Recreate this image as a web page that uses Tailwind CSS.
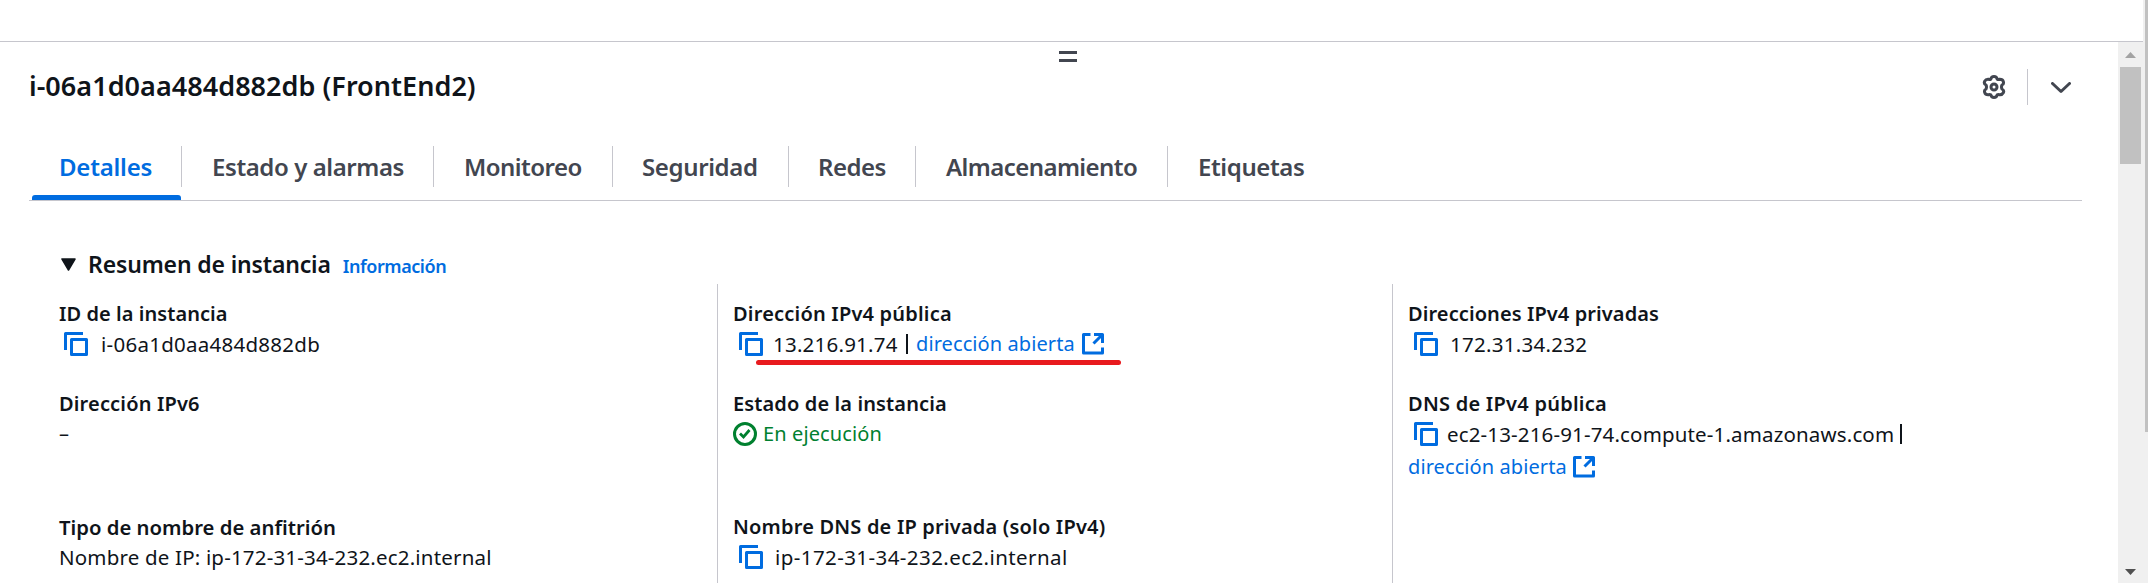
<!DOCTYPE html>
<html lang="es">
<head>
<meta charset="utf-8">
<title>Instancias | EC2</title>
<script src="https://cdn.jsdelivr.net/npm/@tailwindcss/browser@4"></script>
</head>
<body class="flex h-[583px] w-[2148px] overflow-hidden bg-white font-['Noto_Sans','Open_Sans',sans-serif] text-[20px] leading-[30px] text-[#0f141a]">
<svg class="hidden">
  <symbol id="copy" viewBox="0 0 24 24"><path d="M1.5 18V1.5H19" fill="none" stroke="#006ce0" stroke-width="3" stroke-linejoin="round"/><rect x="7.5" y="7.5" width="15" height="15" fill="none" stroke="#006ce0" stroke-width="3" stroke-linejoin="round"/></symbol>
  <symbol id="ext" viewBox="0 0 22 22"><path d="M8.5 1.5H1.5V20H20.5V14.5M12 1.5H20.5V10M20 2L11.500 10.500" fill="none" stroke="#006ce0" stroke-width="3" stroke-linejoin="round"/></symbol>
</svg>
<div class="flex w-[2143px] shrink-0 flex-col">
  <div class="h-[42px] shrink-0 border-b border-[#c6c6cd]"></div>
  <div class="flex min-h-0 flex-1">
    <main class="w-[2118px] shrink-0 overflow-hidden">
      <div class="flex h-[21px] flex-col items-center pt-[9px] pr-[-18px] pl-[18px]">
        <div class="h-[11px] w-[18px] border-t-[3px] border-b-[3px] border-[#424650]"></div>
      </div>
      <header class="flex h-[48px] items-center pl-[29px]">
        <h1 class="flex-1 pb-[2px] text-[27px] leading-[36px] font-semibold tracking-[0.04px]">i-06a1d0aa484d882db (FrontEnd2)</h1>
        <svg class="h-[24px] w-[24px]" viewBox="0 0 24 24" fill="none" stroke="#424650" stroke-width="3" stroke-linejoin="round"><path d="M8.800 4.200Q9.300 1.500 12 1.500T15.200 4.200Q16.200 4.800 17.200 4.300Q20.500 4 21.300 6.500T20 10Q19 12 20 14Q22.500 15.500 21.300 17.800T17.200 19.700Q16.200 19.200 15.200 19.800Q14.700 22.500 12 22.500T8.800 19.800Q7.800 19.200 6.800 19.700Q3.500 20 2.700 17.500T4 14Q5 12 4 10Q1.500 8.500 2.700 6.200T6.800 4.300Q7.800 4.800 8.800 4.200Z"/><circle cx="12" cy="12" r="3"/></svg>
        <div class="ml-[21px] h-[36px] w-px bg-[#c6c6cd]"></div>
        <svg class="mr-[47px] ml-[23px] h-[12px] w-[20px] translate-y-px" viewBox="0 0 20 12"><path d="M1.500 1.500L10 9.500L18.500 1.500" fill="none" stroke="#424650" stroke-width="3" stroke-linecap="round" stroke-linejoin="round"/></svg>
      </header>
      <nav class="ml-[29px] flex h-[90px] w-[2053px] items-end border-b border-[#c6c6cd] pl-[3px] text-[24px] font-semibold text-[#424650]">
        <div class="flex h-[55px] w-[149px] flex-col justify-between text-[#006ce0]"><span class="pt-[7px] pl-[27px] tracking-[-0.22px]">Detalles</span><span class="h-[5px] rounded-t-[3px] bg-[#006ce0]"></span></div>
        <div class="mb-[13px] flex h-[41px] w-[252px] items-center border-l border-[#c6c6cd] pl-[30px] tracking-[-0.42px]">Estado y alarmas</div>
        <div class="mb-[13px] flex h-[41px] w-[179px] items-center border-l border-[#c6c6cd] pl-[30px] tracking-[-0.53px]">Monitoreo</div>
        <div class="mb-[13px] flex h-[41px] w-[176px] items-center border-l border-[#c6c6cd] pl-[29px] tracking-[-0.36px]">Seguridad</div>
        <div class="mb-[13px] flex h-[41px] w-[127px] items-center border-l border-[#c6c6cd] pl-[29px] tracking-[-0.51px]">Redes</div>
        <div class="mb-[13px] flex h-[41px] w-[252px] items-center border-l border-[#c6c6cd] pl-[30px] tracking-[-0.57px]">Almacenamiento</div>
        <div class="mb-[13px] flex h-[41px] items-center border-l border-[#c6c6cd] pl-[30px] tracking-[-0.39px]">Etiquetas</div>
      </nav>
      <h2 class="flex h-[83px] items-baseline pt-[48px] pl-[61px] font-semibold">
        <svg class="h-[13px] w-[15px] -translate-y-[2px]" viewBox="0 0 15 13"><path d="M1 1H14L7.500 12Z" fill="#0f141a" stroke="#0f141a" stroke-width="1.500" stroke-linejoin="round"/></svg>
        <span class="ml-[12px] text-[23px] tracking-[-0.15px]">Resumen de instancia</span>
        <a class="ml-[12px] text-[18px] tracking-[-0.44px] text-[#006ce0]">Información</a>
      </h2>
      <div class="flex h-[299px]">
        <section class="flex w-[717px] flex-col pt-[15px] pl-[58px]">
          <div class="h-[90px]">
            <div class="pl-px font-semibold tracking-[0.06px]">ID de la instancia</div>
            <div class="flex items-center"><svg class="ml-[6px] h-[24px] w-[24px]"><use href="#copy"/></svg><span class="ml-[13px] text-[20.5px] tracking-[0.26px]">i-06a1d0aa484d882db</span></div>
          </div>
          <div class="h-[123px]">
            <div class="pl-px font-semibold tracking-[0.16px]">Dirección IPv6</div>
            <div class="pl-px">–</div>
          </div>
          <div>
            <div class="pl-px text-[20.3px] font-semibold">Tipo de nombre de anfitrión</div>
            <div class="pl-px text-[20.5px] tracking-[0.18px]">Nombre de IP: ip-172-31-34-232.ec2.internal</div>
          </div>
        </section>
        <section class="flex w-[675px] flex-col border-l border-[#c6c6cd] pt-[15px] pl-[15px]">
          <div class="relative h-[90px]">
            <div class="font-semibold tracking-[0.2px]">Dirección IPv4 pública</div>
            <div class="flex items-center"><svg class="ml-[6px] h-[24px] w-[24px]"><use href="#copy"/></svg><span class="ml-[10px] w-[133px] text-[20.5px] tracking-[0.22px]">13.216.91.74</span><span class="h-[20px] w-[2px] bg-[#0f141a]"></span><a class="ml-[8px] tracking-[0.09px] text-[#006ce0]">dirección abierta</a><svg class="ml-[7px] h-[22px] w-[22px]"><use href="#ext"/></svg></div>
            <div class="absolute top-[61px] left-[23px] h-[5px] w-[365px] rounded-full bg-[#e81a1e]"></div>
          </div>
          <div class="h-[123px]">
            <div class="font-semibold tracking-[0.12px]">Estado de la instancia</div>
            <div class="flex items-center text-[#00802f]"><svg class="h-[24px] w-[24px]" viewBox="0 0 24 24" fill="none" stroke="#00802f"><circle cx="12" cy="12" r="10.500" stroke-width="3"/><path d="M7 11.500L10.500 15L16.500 8" stroke-width="2.800"/></svg><span class="ml-[6px] tracking-[0.12px]">En ejecución</span></div>
          </div>
          <div>
            <div class="font-semibold tracking-[0.19px]">Nombre DNS de IP privada (solo IPv4)</div>
            <div class="flex items-center"><svg class="ml-[6px] h-[24px] w-[24px]"><use href="#copy"/></svg><span class="ml-[12px] text-[20.5px] tracking-[0.42px]">ip-172-31-34-232.ec2.internal</span></div>
          </div>
        </section>
        <section class="flex w-[700px] flex-col border-l border-[#c6c6cd] pt-[15px] pl-[15px]">
          <div class="h-[90px]">
            <div class="font-semibold tracking-[0.09px]">Direcciones IPv4 privadas</div>
            <div class="flex items-center"><svg class="ml-[6px] h-[24px] w-[24px]"><use href="#copy"/></svg><span class="ml-[12px] text-[20.5px] tracking-[0.27px]">172.31.34.232</span></div>
          </div>
          <div>
            <div class="font-semibold tracking-[0.25px]">DNS de IPv4 pública</div>
            <div class="flex items-center"><svg class="ml-[6px] h-[24px] w-[24px]"><use href="#copy"/></svg><span class="ml-[9px] w-[453px] text-[20.5px] tracking-[0.15px]">ec2-13-216-91-74.compute-1.amazonaws.com</span><span class="h-[20px] w-[2px] bg-[#0f141a]"></span></div>
            <div class="mt-[3px] flex items-center"><a class="tracking-[0.09px] text-[#006ce0]">dirección abierta</a><svg class="ml-[6px] h-[22px] w-[22px]"><use href="#ext"/></svg></div>
          </div>
        </section>
      </div>
    </main>
    <div class="flex w-[25px] flex-col items-center justify-between bg-[#f0f0f0] pt-[10px] pb-[8px]">
      <div class="flex flex-col items-center">
        <svg class="h-[6px] w-[11px]" viewBox="0 0 11 6"><path d="M0 6L5.500 0L11 6Z" fill="#a3a3a3"/></svg>
        <div class="mt-[9px] h-[97px] w-[21px] bg-[#c1c1c1]"></div>
      </div>
      <svg class="h-[6px] w-[11px]" viewBox="0 0 11 6"><path d="M0 0L5.500 6L11 0Z" fill="#505050"/></svg>
    </div>
  </div>
</div>
<div class="w-[5px] bg-[#f0f0f0] pl-[2px]"><div class="h-[432px] bg-[#c1c1c1]"></div></div>
</body>
</html>
